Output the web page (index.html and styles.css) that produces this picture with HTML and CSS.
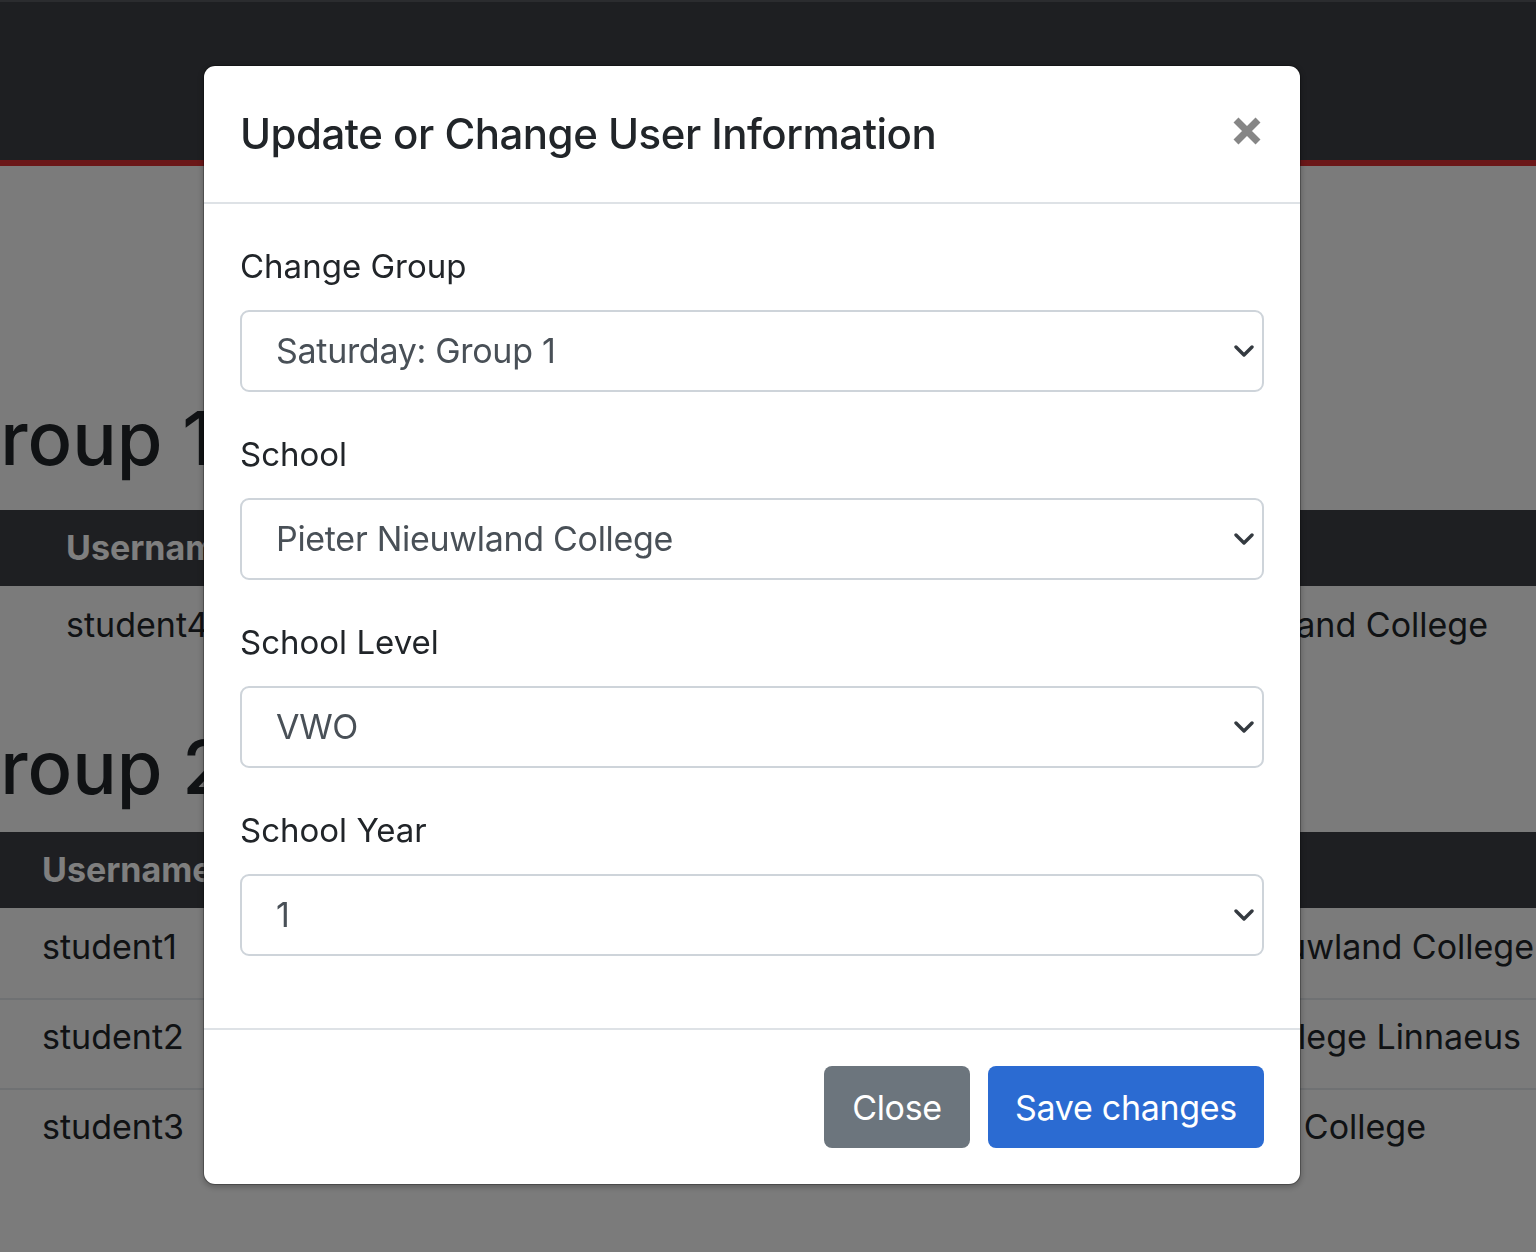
FILE: index.html
```html
<!DOCTYPE html>
<html lang="en">
<head>
<meta charset="utf-8">
<title>Update or Change User Information</title>
<link rel="stylesheet" href="styles.css">
</head>
<body>
<div class="page">
  <nav class="navbar"></nav>
  <main class="content">
    <h1 class="group-title g1">Group 1</h1>
    <div class="tbl t1">
      <div class="th user">Username</div><div class="th"></div>
      <div class="td user">student4</div><div class="td school s-a">Pieter Nieuwland College</div>
    </div>
    <h1 class="group-title g2">Group 2</h1>
    <div class="tbl t2">
      <div class="th user">Username</div><div class="th"></div>
      <div class="td user">student1</div><div class="td school s-b">Pieter Nieuwland College</div>
      <div class="td user sep">student2</div><div class="td school sep s-c">Het College Linnaeus</div>
      <div class="td user sep">student3</div><div class="td school sep s-d">Het Ichthus College</div>
    </div>
  </main>
</div>

<div class="backdrop"></div>

<div class="modal">
  <div class="modal-header">
    <h5 class="modal-title">Update or Change User Information</h5>
    <button class="btn-close" type="button" aria-label="Close">
      <svg width="28" height="28" viewBox="0 0 28 28"><path d="M3 3L25 25M25 3L3 25" stroke="#868686" stroke-width="7" fill="none"/></svg>
    </button>
  </div>
  <div class="modal-body">
    <div class="field">
      <label class="form-label">Change Group</label>
      <div class="form-select"><span>Saturday: Group 1</span><svg class="chev" width="20" height="12" viewBox="0 0 20 12"><path d="M2 2l8 8 8-8" stroke="#343a40" stroke-width="3.4" fill="none" stroke-linecap="round" stroke-linejoin="round"/></svg></div>
    </div>
    <div class="field">
      <label class="form-label">School</label>
      <div class="form-select"><span>Pieter Nieuwland College</span><svg class="chev" width="20" height="12" viewBox="0 0 20 12"><path d="M2 2l8 8 8-8" stroke="#343a40" stroke-width="3.4" fill="none" stroke-linecap="round" stroke-linejoin="round"/></svg></div>
    </div>
    <div class="field">
      <label class="form-label">School Level</label>
      <div class="form-select"><span>VWO</span><svg class="chev" width="20" height="12" viewBox="0 0 20 12"><path d="M2 2l8 8 8-8" stroke="#343a40" stroke-width="3.4" fill="none" stroke-linecap="round" stroke-linejoin="round"/></svg></div>
    </div>
    <div class="field">
      <label class="form-label">School Year</label>
      <div class="form-select"><span>1</span><svg class="chev" width="20" height="12" viewBox="0 0 20 12"><path d="M2 2l8 8 8-8" stroke="#343a40" stroke-width="3.4" fill="none" stroke-linecap="round" stroke-linejoin="round"/></svg></div>
    </div>
  </div>
  <div class="modal-footer">
    <button class="btn btn-secondary" type="button">Close</button>
    <button class="btn btn-primary" type="button">Save changes</button>
  </div>
</div>
</body>
</html>
```

FILE: styles.css
```css
* { box-sizing: border-box; }
html, body { margin: 0; padding: 0; }
body {
  width: 1536px;
  height: 1252px;
  overflow: hidden;
  background: #f6f6f6;
  font-family: Inter, "Noto Sans", sans-serif;
  color: #212529;
}
.page { width: 1536px; }
.navbar {
  height: 166px;
  background: #3c3e44;
  border-top: 2px solid #56585e;
  border-bottom: 6px solid #d62e30;
}
.content { padding-top: 230px; }
.group-title {
  margin: 0 0 0 -55px;
  font-size: 74px;
  font-weight: 500;
  line-height: 84px;
  white-space: nowrap;
}
.tbl {
  display: grid;
  font-size: 34px;
}
.tbl .th {
  background: #3c3e44;
  color: #fff;
  font-weight: 700;
  height: 76px;
  line-height: 76px;
}
.tbl .td {
  height: 90px;
  line-height: 78px;
  white-space: nowrap;
  overflow: hidden;
}
.tbl .sep { border-top: 2px solid #dee2e6; line-height: 74px; }
.tbl .school { text-align: right; }
.t1 { margin-top: 30px; grid-template-columns: 1000px 536px; }
.t1 .user { padding-left: 66px; }
.g2 { margin-top: 49px; }
.t2 { margin-top: 23px; grid-template-columns: 1000px 536px; }
.t2 .user { padding-left: 42px; }
.s-a { padding-right: 48px; }
.s-b { padding-right: 2px; }
.s-c { padding-right: 15px; }
.s-d { padding-right: 110px; }

.backdrop {
  position: fixed;
  inset: 0;
  background: rgba(0,0,0,.5);
}

.modal {
  position: fixed;
  top: 65px;
  left: 203px;
  width: 1098px;
  background: #fff;
  border: 1px solid rgba(0,0,0,.25);
  border-radius: 12px;
  background-clip: padding-box;
  box-shadow: 0 2px 6px rgba(0,0,0,.25);
  display: flex;
  flex-direction: column;
}
.modal-header {
  height: 138px;
  padding: 0 39px 0 36px;
  border-bottom: 2px solid #dee2e6;
  display: flex;
  align-items: center;
  justify-content: space-between;
}
.modal-title {
  margin: 0;
  font-size: 42px;
  letter-spacing: -0.5px;
  font-weight: 500;
  line-height: 66px;
  color: #212529;
}
.btn-close {
  border: 0;
  background: transparent;
  padding: 0;
  width: 28px;
  height: 28px;
  margin-top: -6px;
  display: flex;
}
.modal-body {
  padding: 36px;
}
.field { margin-bottom: 36px; }
.field:last-child { margin-bottom: 0; }
.modal-body { padding-bottom: 72px; }
.form-label {
  display: block;
  font-size: 33px;
  line-height: 52px;
  margin-bottom: 18px;
  color: #212529;
}
.form-select {
  height: 82px;
  border: 2px solid #ced4da;
  border-radius: 9px;
  display: flex;
  align-items: center;
  justify-content: space-between;
  padding: 0 8px 0 34px;
  font-size: 34px;
  letter-spacing: -0.3px;
  color: #495057;
}
.form-select span { line-height: 1; }
.modal-footer {
  border-top: 2px solid #dee2e6;
  padding: 36px;
  display: flex;
  justify-content: flex-end;
  gap: 18px;
}
.btn {
  height: 82px;
  border: 0;
  border-radius: 8px;
  color: #fff;
  font-family: Inter, "Noto Sans", sans-serif;
  font-size: 34px;
  letter-spacing: -0.3px;
  padding: 0;
  white-space: nowrap;
}
.btn-secondary { background: #6c757d; width: 146px; }
.btn-primary { background: #2b6bd2; width: 276px; }
```
